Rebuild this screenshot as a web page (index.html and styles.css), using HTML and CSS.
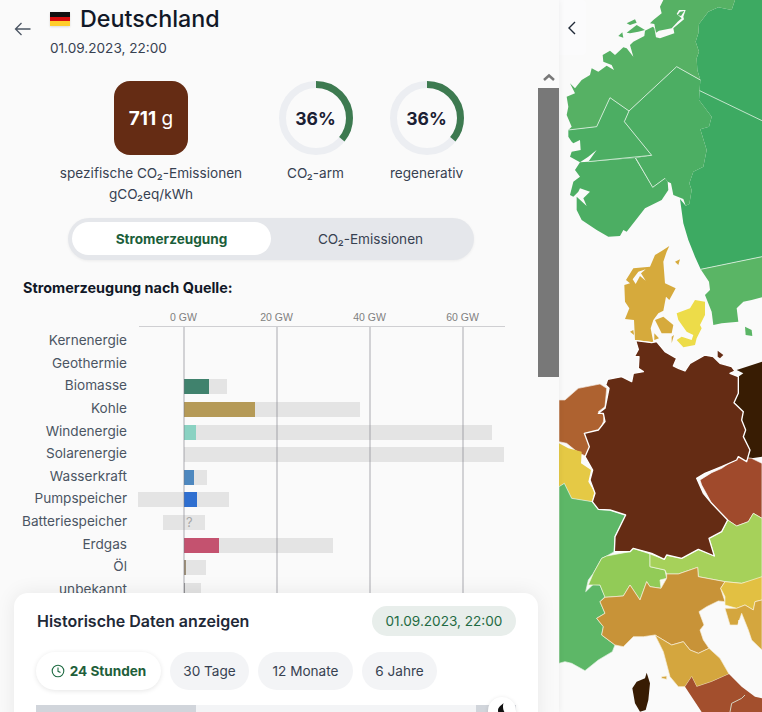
FILE: index.html
```html
<!DOCTYPE html>
<html lang="de">
<head>
<meta charset="utf-8">
<title>Deutschland</title>
<link rel="stylesheet" href="styles.css">
</head>
<body>
<div class="app">
  <svg class="map" width="762" height="712" viewBox="0 0 762 712">
    <g transform="translate(555,0) scale(0.33333)">
      <polygon class="c-swe" points="540,0 621,0 621,770 437,808 420,770 400,720 385,670 375,597 392,617 403,612 410,570 403,550 415,515 445,500 455,450 436,388 462,380 470,350 432,300 436,240 427,210 425,175 432,155 422,125 430,100 432,72 460,35 490,22 530,30"/>
      <polygon class="c-nor1" points="325,0 540,0 530,30 490,22 460,35 432,72 430,100 422,125 432,155 425,175 427,210 436,240 365,200 222,333 165,293 125,380 40,390 50,380 35,345 40,320 35,290 60,280 45,250 60,265 80,240 105,225 110,205 130,215 155,197 177,210 170,195 145,185 143,165 165,152 180,165 205,142 215,145 235,170 225,135 235,125 268,108 270,92 298,78 285,70 295,60 320,40 315,20"/>
      <polygon class="c-bg" points="285,70 298,72 303,98 312,92 350,85 368,65 380,55 365,42 372,30 392,30 385,50 387,58 355,85 358,100 315,115 303,112 298,85"/>
      <polygon class="c-nor1" points="375,35 388,33 378,48 368,45"/>
      <polygon class="c-nor2" points="40,390 125,380 165,293 222,333 208,365 290,466 240,474 100,485 125,450 100,470 75,487 45,470 50,455 77,450 75,420 55,430 50,425 40,410"/>
      <polygon class="c-nor2" points="222,333 365,200 436,240 432,300 470,350 462,380 436,388 455,450 445,500 415,515 403,550 410,570 403,612 392,617 385,597 355,585 348,550 338,545 330,535 293,562 242,474 290,466 208,365"/>
      <polygon class="c-nor2" points="100,485 240,474 293,562 330,535 338,545 340,570 320,600 270,625 215,695 205,690 195,708 160,710 125,690 80,660 65,630 65,590 95,618 85,595 105,575 75,565 70,575 55,590 45,585 55,545 75,530 60,510 75,487"/>
      <polyline class="bd-thin" points="40,390 125,380 165,293 222,333 365,200 436,240"/>
      <polyline class="bd-thin" points="222,333 208,365 290,466 100,485"/>
      <polyline class="bd-thin" points="242,474 293,562 330,535"/>
      <polyline class="bd-thin" points="434,272 621,362"/>
      <polygon class="c-nor1" points="215,70 240,58 245,68 225,75"/>
      <polygon class="c-nor1" points="215,98 245,75 270,90 250,95 225,100"/>
      <polygon class="c-nor1" points="190,108 202,97 205,113"/>
    </g>
    <g transform="translate(555,240) scale(0.33333)">
      <polygon class="c-swes" points="437,88 621,50 621,172 590,180 565,185 545,205 550,245 500,250 475,255 470,215 450,165 465,150 462,125"/>
      <polygon class="c-swes" points="570,260 590,270 592,288 572,285"/>
      <polyline class="bd-thin" points="437,88 621,50"/>
      <polygon class="c-dkw" points="343,18 320,33 300,45 285,80 235,85 213,120 225,130 208,135 210,185 223,205 210,237 237,240 240,300 295,307 287,265 295,240 310,220 325,212 333,170 343,180 362,145 330,130 325,65 335,35"/>
      <polygon class="c-bg" points="233,118 250,95 272,88 258,100 272,122 255,108 242,132"/>
      <polygon class="c-dkw" points="300,240 325,230 355,255 350,280 320,280"/>
      <polygon class="c-dkw" points="225,275 235,270 237,285"/>
      <polygon class="c-dkw" points="298,280 312,295 298,300"/>
      <polygon class="c-dkw" points="350,290 357,285 350,310"/>
      <polygon class="c-dkw" points="360,65 375,58 370,75"/>
      <polygon class="c-dke" points="365,220 405,205 420,180 450,185 450,225 435,255 440,265 425,295 420,315 385,322 365,300 380,290 410,300 415,285 395,275 370,240"/>
      <polygon class="c-pol" points="545,390 621,365 621,650 590,655 575,665 585,630 565,590 572,570 560,540 565,515 537,488 550,460 550,410 565,400"/>
      <polygon class="c-nld" points="12,480 30,480 70,445 135,432 155,445 150,500 130,515 148,525 145,545 135,570 90,580 105,620 95,650 75,640 60,630 35,610 12,605"/>
      <polygon class="c-rug" points="488,332 505,345 495,355 488,350"/>
    </g>
    <g transform="translate(555,470) scale(0.33333)">
      <polygon class="c-bel" points="12,-80 40,-65 80,-55 78,-20 108,0 100,35 118,65 112,95 50,85 28,40 12,50"/>
      <polygon class="c-fra" points="12,50 28,40 50,85 112,95 130,118 165,120 212,135 180,200 178,245 155,258 140,265 115,310 100,330 92,365 115,343 135,345 150,380 135,395 150,430 125,445 145,470 140,495 180,525 172,545 130,570 90,602 50,580 30,575 12,580"/>
      <polygon class="c-cze" points="440,45 435,30 470,8 500,-5 550,-40 590,-35 621,-20 621,145 595,130 580,155 545,168 518,150 470,100"/>
      <polygon class="c-che" points="140,265 155,258 225,245 235,235 285,252 285,290 330,300 335,325 315,330 318,355 285,350 275,335 255,390 225,345 205,378 150,382 135,345 100,345 115,310"/>
      <polygon class="c-aut" points="285,252 328,268 335,255 380,265 430,238 478,258 462,205 500,185 518,150 545,168 580,155 595,130 621,145 621,325 560,340 510,335 430,320 428,292 370,312 335,312 330,300 285,290"/>
      <polygon class="c-itn" points="150,382 205,378 225,345 255,390 275,335 285,350 318,355 335,325 335,312 370,312 428,292 430,320 510,335 497,355 510,395 490,393 455,410 432,425 447,465 435,480 445,510 462,535 430,550 405,540 385,515 350,525 300,495 265,500 235,500 205,530 180,525 140,495 145,470 125,445 150,430 135,395"/>
      <polygon class="c-itc" points="300,495 350,525 385,515 405,540 430,550 462,535 495,565 522,612 470,635 425,650 410,620 390,650 370,650 345,620 325,545"/>
      <polygon class="c-its" points="522,612 560,650 600,680 621,685 621,726 440,726 390,650 410,620 425,650 470,635"/>
      <polyline class="bd-thin" points="525,726 530,700 560,685 570,675"/>
      <polygon class="c-svn" points="510,335 560,340 621,320 621,390 600,395 595,420 570,405 545,415 510,405 510,380 497,355"/>
      <polygon class="c-itc" points="510,415 545,415 570,405 595,420 600,395 621,390 621,540 590,510 580,480 560,430 548,465 525,465"/>
      <polygon class="c-bg" points="550,450 558,450 558,480 550,475"/>
      <polygon class="c-pol" points="275,608 285,640 280,690 272,720 255,725 240,700 232,655 245,635 270,625"/>
      <polygon class="c-itc" points="320,620 335,618 335,628 320,625"/>
      <polygon class="c-ger" points="113,0 90,-40 103,-70 88,-110 130,-120 150,-145 145,-170 130,-170 150,-185 162,-245 152,-255 158,-272 200,-280 230,-265 235,-290 265,-295 250,-305 252,-340 238,-340 250,-362 242,-388 290,-382 305,-385 330,-355 365,-335 355,-312 370,-305 390,-297 405,-320 450,-345 475,-340 495,-320 530,-310 540,-297 525,-290 550,-280 550,-230 537,-202 565,-175 560,-150 572,-120 565,-100 585,-60 575,-25 550,-40 545,-30 500,-10 450,10 425,25 445,70 470,100 518,150 500,185 462,205 478,258 430,238 380,265 335,255 328,268 290,250 235,235 225,245 178,245 180,200 212,135 165,120 130,118 112,95 120,70 105,30"/>
    </g>
  </svg>

  <button class="collapse" type="button" aria-label="Einklappen">
    <svg width="10" height="16" viewBox="0 0 10 16"><path d="M8 2 2 8l6 6" fill="none" stroke="#1f2937" stroke-width="1.4"/></svg>
  </button>

  <aside class="panel">
    <header class="head">
      <button class="back" type="button" aria-label="Zurück">
        <svg width="18" height="14" viewBox="0 0 18 14"><path d="M16.500 7H1.500M7.500 1l-6 6 6 6" fill="none" stroke="#4b5563" stroke-width="1.300"/></svg>
      </button>
      <div class="head-text">
        <h1 class="title"><span class="flag"><i class="f1"></i><i class="f2"></i><i class="f3"></i></span>Deutschland</h1>
        <p class="date">01.09.2023, 22:00</p>
      </div>
    </header>

    <div class="scroller">
      <div class="content">
        <div class="stats">
          <div class="stat stat-wide">
            <div class="square"><b>711</b>&nbsp;g</div>
            <p class="stat-label">spezifische CO₂-Emissionen<br>gCO₂eq/kWh</p>
          </div>
          <div class="stat">
            <div class="ring">
              <svg width="74" height="74" viewBox="0 0 74 74"><circle class="ring-bg" cx="37" cy="37" r="33.500"/><circle class="ring-val" cx="37" cy="37" r="33.500" pathLength="100" stroke-dasharray="36 64" transform="rotate(-90 37 37)"/></svg>
              <span class="ring-text">36%</span>
            </div>
            <p class="stat-label">CO₂-arm</p>
          </div>
          <div class="stat">
            <div class="ring">
              <svg width="74" height="74" viewBox="0 0 74 74"><circle class="ring-bg" cx="37" cy="37" r="33.500"/><circle class="ring-val" cx="37" cy="37" r="33.500" pathLength="100" stroke-dasharray="36 64" transform="rotate(-90 37 37)"/></svg>
              <span class="ring-text">36%</span>
            </div>
            <p class="stat-label">regenerativ</p>
          </div>
        </div>

        <div class="toggle">
          <span class="tog tog-on">Stromerzeugung</span>
          <span class="tog">CO₂-Emissionen</span>
        </div>

        <h2 class="chart-title">Stromerzeugung nach Quelle:</h2>

        <div class="chart">
          <div class="axis">
            <span class="tick" style="left:44.500px">0 GW</span>
            <span class="tick" style="left:137.500px">20 GW</span>
            <span class="tick" style="left:230.500px">40 GW</span>
            <span class="tick" style="left:323.500px">60 GW</span>
          </div>
          <div class="rows">
            <div class="row"><span class="lab">Kernenergie</span><div class="plot"></div></div>
            <div class="row"><span class="lab">Geothermie</span><div class="plot"></div></div>
            <div class="row"><span class="lab">Biomasse</span><div class="plot"><i class="cap" style="left:45px;width:43px"></i><i class="bar" style="left:45px;width:25px;background:#40826d"></i></div></div>
            <div class="row"><span class="lab">Kohle</span><div class="plot"><i class="cap" style="left:45px;width:176px"></i><i class="bar" style="left:45px;width:71px;background:#b59a57"></i></div></div>
            <div class="row"><span class="lab">Windenergie</span><div class="plot"><i class="cap" style="left:45px;width:308px"></i><i class="bar" style="left:45px;width:12px;background:#8ad2c2"></i></div></div>
            <div class="row"><span class="lab">Solarenergie</span><div class="plot"><i class="cap" style="left:45px;width:320px"></i></div></div>
            <div class="row"><span class="lab">Wasserkraft</span><div class="plot"><i class="cap" style="left:45px;width:23px"></i><i class="bar" style="left:45px;width:10px;background:#4e88bf"></i></div></div>
            <div class="row"><span class="lab">Pumpspeicher</span><div class="plot"><i class="cap" style="left:-1px;width:91px"></i><i class="bar" style="left:45px;width:13px;background:#2f6fd0"></i></div></div>
            <div class="row"><span class="lab">Batteriespeicher</span><div class="plot"><i class="cap" style="left:24px;width:42px"></i><span class="unknown">?</span></div></div>
            <div class="row"><span class="lab">Erdgas</span><div class="plot"><i class="cap" style="left:45px;width:149px"></i><i class="bar" style="left:45px;width:35px;background:#c4526f"></i></div></div>
            <div class="row"><span class="lab">Öl</span><div class="plot"><i class="cap" style="left:45px;width:22px"></i><i class="bar" style="left:45px;width:2px;background:#9c8f78"></i></div></div>
            <div class="row"><span class="lab">unbekannt</span><div class="plot"><i class="cap" style="left:45px;width:17px"></i><i class="bar" style="left:45px;width:1px;background:#9c9c9c"></i></div></div>
          </div>
          <div class="gridlines">
            <i class="gl" style="left:44px"></i>
            <i class="gl" style="left:137px"></i>
            <i class="gl" style="left:230px"></i>
            <i class="gl" style="left:323px"></i>
          </div>
        </div>
      </div>

      <div class="scrollbar">
        <svg class="sb-arrow" width="14" height="9" viewBox="0 0 14 9"><path d="M2 7l5-4.500L12 7" fill="none" stroke="#787878" stroke-width="2.500"/></svg>
        <div class="sb-thumb"></div>
      </div>
    </div>
  </aside>

  <section class="history">
    <div class="hist-top">
      <h2 class="hist-title">Historische Daten anzeigen</h2>
      <span class="hist-date">01.09.2023, 22:00</span>
    </div>
    <div class="ranges">
      <span class="range range-on">
        <svg width="14" height="14" viewBox="0 0 14 14"><circle cx="7" cy="7" r="5.800" fill="none" stroke="#1f6b43" stroke-width="1.100"/><path d="M7 3.500V7.300L9.500 8.500" fill="none" stroke="#1f6b43" stroke-width="1.100"/></svg>
        24 Stunden
      </span>
      <span class="range r-79">30 Tage</span>
      <span class="range r-95">12 Monate</span>
      <span class="range r-75">6 Jahre</span>
    </div>
    <div class="slider">
      <i class="s-a"></i><i class="s-b"></i><i class="s-c"></i>
      <span class="handle">
        <svg width="10" height="12" viewBox="0 0 10 12"><path d="M6.500 0C5 2 1 3.500 1 7.500S4 12 5 12h5C7 10 5 5 6.500 0Z" fill="#111"/></svg>
      </span>
    </div>
  </section>
</div>
</body>
</html>
```
FILE: styles.css
```css
* { box-sizing: border-box; }
html, body { margin: 0; height: 100%; overflow: hidden; background: #fafafa; }
body { font-family: "Inter", "Liberation Sans", sans-serif; color: #374151; }
p, h1, h2 { margin: 0; }
button { border: 0; padding: 0; background: none; cursor: pointer; }

.app { position: relative; width: 762px; height: 712px; overflow: hidden; background: #fafafa; }

/* map */
.map { position: absolute; left: 0; top: 0; }
.map polygon { stroke-linejoin: round; }
.bd-thin { fill: none; stroke: #dff0e2; stroke-width: 2.500; }
.c-swe { fill: #3daa62; }
.c-swes { fill: #5ab565; }
.c-nor1 { fill: #56b164; }
.c-nor2 { fill: #4cae63; }
.c-dkw { fill: #d6aa3c; }
.c-dke { fill: #eddc49; }
.c-bg { fill: #fafafa; }
.c-pol { fill: #381c03; }
.c-rug { fill: #652c14; }
.c-nld { fill: #ae6230; stroke: #f2e6dc; stroke-width: 2; }
.c-bel { fill: #e5c945; }
.c-fra { fill: #5db767; stroke: #e5f3e6; stroke-width: 2; }
.c-cze { fill: #a04a2c; stroke: #fff; stroke-width: 2; }
.c-che { fill: #92cb57; stroke: #f1f8e6; stroke-width: 2; }
.c-aut { fill: #a6d15a; stroke: #f4f9e8; stroke-width: 2; }
.c-itn { fill: #c89338; stroke: #f7eeda; stroke-width: 2; }
.c-itc { fill: #d4a63e; stroke: #f7eeda; stroke-width: 2; }
.c-its { fill: #a34f2d; }
.c-svn { fill: #e2c042; stroke: #fbf4da; stroke-width: 2; }
.c-ger { fill: #652c14; stroke: #fff; stroke-width: 4; }

.collapse {
  position: absolute; left: 550px; top: 0; width: 36px; height: 55px;
  display: flex; align-items: center; justify-content: flex-end;
  padding-right: 9px; background: #fbfbfc; border-radius: 0 4px 4px 0;
}

/* panel */
.panel {
  position: absolute; left: 0; top: 0; width: 559px; height: 712px;
  display: flex; flex-direction: column; background: #fafafa;
  box-shadow: 1px 0 6px rgba(0,0,0,.05);
}
.head { height: 68px; flex: none; display: flex; position: relative; }
.back { width: 50px; height: 58px; padding: 22px 0 0 14px; display: flex; align-items: flex-start; flex: none; }
.head-text { padding-top: 3px; }
.title { display: flex; align-items: center; font-size: 23.300px; font-weight: 500; line-height: 32px; color: #111827; }
.flag { width: 20px; height: 14px; margin-right: 10px; display: flex; flex-direction: column; box-shadow: 0 1px 2px rgba(0,0,0,.12); }
.flag i { flex: 1; display: block; }
.f1 { background: #111; }
.f2 { background: #d80f0f; }
.f3 { background: #ffce2a; }
.date { font-size: 13.600px; line-height: 20px; margin-top: 3px; color: #374151; }

.scroller { flex: 1; min-height: 0; display: flex; }
.content { width: 538px; flex: none; overflow: hidden; padding-top: 13px; }

.stats { display: flex; height: 137px; padding-left: 51px; }
.stat { display: flex; flex-direction: column; align-items: center; width: 111px; }
.stat-wide { width: 200px; margin-right: 9px; }
.square {
  width: 74px; height: 74px; border-radius: 16px; background: #652c14; color: #fff;
  display: flex; align-items: center; justify-content: center; font-size: 19px;
}
.square b { font-weight: 700; }
.stat-label { margin-top: 8px; font-size: 13.600px; line-height: 21px; text-align: center; color: #374151; white-space: nowrap; }
.ring { position: relative; width: 74px; height: 74px; }
.ring svg { display: block; }
.ring-bg { fill: none; stroke: #eceef2; stroke-width: 7; }
.ring-val { fill: none; stroke: #3d7a50; stroke-width: 7; }
.ring-text {
  position: absolute; inset: 0; display: flex; align-items: center; justify-content: center;
  font-size: 17.500px; font-weight: 700; color: #1a2033;
}

.toggle {
  margin-left: 68px; width: 406px; height: 42px; border-radius: 21px; background: #e5e7eb; padding: 4px;
  display: flex; font-size: 13.600px; box-shadow: 0 1px 3px rgba(0,0,0,.06);
}
.tog { flex: 1; display: flex; align-items: center; justify-content: center; color: #374151; border-radius: 17px; height: 33px; }
.tog-on { flex: none; width: 199px; background: #fff; color: #1b5e3a; font-weight: 700; }

.chart-title { margin: 18px 0 0 23px; font-size: 14.400px; line-height: 20px; font-weight: 700; color: #111827; }

.chart { position: relative; margin: 12px 0 0 139px; width: 366px; }
.axis { position: relative; height: 17px; border-bottom: 1.500px solid #cfcfd2; }
.tick {
  position: absolute; top: 0; transform: translateX(-50%); font-family: "Liberation Sans", sans-serif;
  font-size: 10.500px; line-height: 14px; color: #808080; white-space: nowrap;
}
.rows { padding-top: 3px; }
.row { position: relative; height: 22.650px; }
.lab {
  position: absolute; right: 378px; top: 0; font-size: 13.600px; line-height: 20px; color: #4b5563; white-space: nowrap;
}
.plot { position: relative; height: 100%; }
.cap, .bar { position: absolute; top: 4px; height: 15px; display: block; }
.cap { background: #e4e4e4; }
.unknown { position: absolute; left: 47px; top: 3px; font-size: 13px; line-height: 17px; color: #a8a8a8; }
.gridlines { position: absolute; left: 0; right: 0; top: 17px; bottom: -5px; }
.gl { position: absolute; top: 0; bottom: 0; width: 1.500px; background: rgba(120,120,130,.3); }

.scrollbar { width: 21px; flex: none; display: flex; flex-direction: column; align-items: center; }
.sb-arrow { margin-top: 5px; height: 9px; }
.sb-thumb { margin-top: 6px; width: 21px; height: 289px; background: #787878; }

/* bottom card */
.history {
  position: absolute; left: 14px; top: 593px; width: 524px; height: 140px;
  background: #fff; border-radius: 14px; padding: 13px 22px 0 22px;
  box-shadow: 0 0 20px rgba(0,0,0,.08);
}
.hist-top { display: flex; justify-content: space-between; align-items: center; height: 30px; }
.hist-title { font-size: 16px; font-weight: 600; color: #1f2937; margin-left: 1px; }
.hist-date {
  height: 30px; width: 144px; border-radius: 15px; background: #e8eeeb; color: #1f6b43;
  font-size: 13.600px; display: flex; align-items: center; justify-content: center;
}
.ranges { display: flex; gap: 9px; margin-top: 16px; }
.range {
  height: 38px; border-radius: 19px; background: #f3f4f6; color: #374151;
  font-size: 13.600px; display: flex; align-items: center; justify-content: center; gap: 5px; white-space: nowrap;
}
.range-on { width: 125px; background: #fff; color: #1f5f3b; font-weight: 700; box-shadow: 0 1px 5px rgba(0,0,0,.1); }
.r-79 { width: 79px; }
.r-95 { width: 95px; }
.r-75 { width: 75px; }
.slider { position: relative; display: flex; height: 14px; margin-top: 15px; }
.slider i { display: block; height: 100%; }
.s-a { width: 160px; background: #d1d5db; }
.s-b { width: 280px; background: #f3f4f6; }
.s-c { width: 40px; background: #d1d5db; }
.handle {
  position: absolute; left: 452px; top: -8px; width: 28px; height: 28px; border-radius: 50%;
  background: #fff; display: flex; align-items: flex-start; justify-content: center; padding-top: 6px;
  box-shadow: 0 1px 4px rgba(0,0,0,.12);
}
```
